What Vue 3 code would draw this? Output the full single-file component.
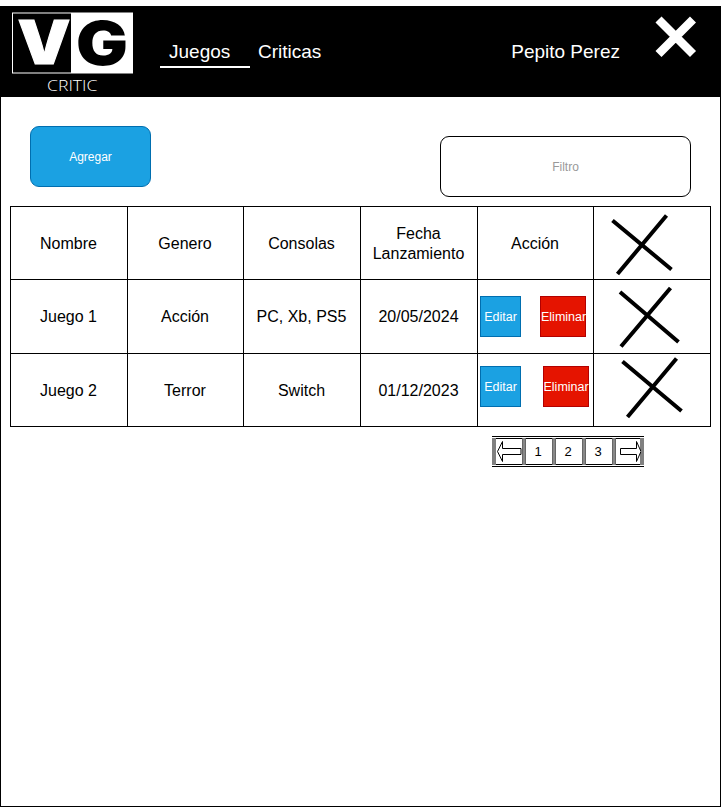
<script setup>
const headers = ['Nombre', 'Genero', 'Consolas', 'Fecha Lanzamiento', 'Acción']
const games = [
  { cells: ['Juego 1', 'Acción', 'PC, Xb, PS5', '20/05/2024'], cross: 'M620 291L678.5 341M670.5 287L621 345.5' },
  { cells: ['Juego 2', 'Terror', 'Switch', '01/12/2023'], cross: 'M622.5 361.5L681.5 411M676.5 358.5L627.5 417' },
]
const pages = [1, 2, 3]
</script>

<template>
  <div class="window">
    <header class="bar">
      <svg class="logo" width="124" height="90" viewBox="10 7 124 90">
        <rect x="12" y="12.5" width="121" height="61" fill="#fff" />
        <rect x="13" y="13.5" width="58" height="59" fill="#000" />
        <text class="mark v" x="17.5" y="64" font-size="60" textLength="53" lengthAdjust="spacingAndGlyphs">V</text>
        <text class="mark" x="76" y="64.5" font-size="61" textLength="52" lengthAdjust="spacingAndGlyphs" fill="#000">G</text>
        <text class="sub" x="47" y="91" font-size="15" textLength="50.5" lengthAdjust="spacingAndGlyphs" fill="#fff">CRITIC</text>
      </svg>
      <nav class="nav">
        <a class="link active">Juegos</a>
        <a class="link">Criticas</a>
      </nav>
      <span class="user">Pepito Perez</span>
      <svg class="close" width="42" height="42" viewBox="0 0 42 42">
        <path d="M3.5 3.5L38 38M38 3.5L3.5 38" stroke="#fff" stroke-width="8.5" />
      </svg>
    </header>

    <div class="tools">
      <button class="add">Agregar</button>
      <input class="filter" placeholder="Filtro" />
    </div>

    <div class="table">
      <div v-for="h in headers" :key="h" class="cell text low">{{ h }}</div>
      <div class="cell">
        <svg class="cross" width="116" height="72" viewBox="594 207 116 72">
          <path d="M612.5 220.5L671.5 269.5M666.5 215.5L617.5 274" />
        </svg>
      </div>
      <template v-for="(g, i) in games" :key="i">
        <div v-for="c in g.cells" :key="c" class="cell text" :class="{ low: i === 1 }">{{ c }}</div>
        <div class="cell actions" :class="{ last: i === 1 }">
          <button class="edit">Editar</button>
          <button class="remove">Eliminar</button>
        </div>
        <div class="cell">
          <svg class="cross" width="116" height="72" :viewBox="`594 ${i ? 354 : 280} 116 72`">
            <path :d="g.cross" />
          </svg>
        </div>
      </template>
    </div>

    <div class="pager">
      <div class="page">
        <svg width="26" height="23" viewBox="496 440 26 23"><path d="M521 448.5H502.5V441.5L497.5 451.5L502.5 461.5V454.5H521Z" /></svg>
      </div>
      <div v-for="p in pages" :key="p" class="page">{{ p }}</div>
      <div class="page">
        <svg width="26" height="23" viewBox="615 440 26 23"><path d="M620.5 448.5H636.5V441.5L641 451.5L636.5 461.5V454.5H620.5Z" /></svg>
      </div>
    </div>
  </div>
</template>

<style>
body {
  background: #fff;
}
</style>

<style scoped>
.window {
  box-sizing: border-box;
  width: 721px;
  height: 801px;
  margin-top: 6px;
  border: 1px solid #000;
  font-family: "Liberation Sans", Arial, sans-serif;
  color: #000;
}
.bar {
  display: flex;
  height: 90px;
  padding-left: 9px;
  background: #000;
  color: #fff;
  font-size: 19px;
  line-height: 22px;
}
.logo,
.close,
.cross,
.page svg {
  display: block;
  flex: none;
}
.mark {
  font-family: Inter, sans-serif;
  font-weight: 900;
}
.v {
  fill: #fff;
  stroke: #fff;
  stroke-width: 1;
}
.sub {
  font-family: "Open Sans", sans-serif;
  font-weight: 300;
}
.nav {
  display: flex;
  margin-left: 26px;
  padding-top: 34px;
}
.link {
  box-sizing: border-box;
  height: 27px;
  padding-left: 8px;
}
.active {
  width: 90px;
  padding-left: 9px;
  border-bottom: 2px solid #fff;
}
.user {
  margin-left: auto;
  padding-top: 34px;
}
.close {
  margin: 9px 23px 0 35px;
}
.tools {
  display: flex;
  justify-content: space-between;
  padding: 29px 29px 0;
}
.add,
.filter {
  box-sizing: border-box;
  height: 61px;
  padding: 0;
  border: 1px solid #006eaf;
  border-radius: 9px;
  font: 12px "Liberation Sans", Arial, sans-serif;
  text-align: center;
}
.add {
  width: 121px;
  background: #1ba1e2;
  color: #fff;
}
.filter {
  width: 251px;
  margin-top: 10px;
  border-color: #000;
  background: #fff;
}
.filter::placeholder {
  color: #999;
  opacity: 1;
}
.table {
  display: grid;
  grid-template-columns: 116px 115px 116px 116px 115px 116px;
  grid-template-rows: 72px 73px 72px;
  gap: 1px;
  width: 699px;
  margin: 9px 0 0 9px;
  border: 1px solid #000;
  background: #000;
}
.cell {
  display: flex;
  box-sizing: border-box;
  align-items: center;
  justify-content: center;
  min-width: 0;
  background: #fff;
  font-size: 16px;
  line-height: 20px;
  text-align: center;
}
.text {
  padding-right: 1px;
}
.low {
  padding-top: 2px;
}
.cross {
  fill: none;
  stroke: #000;
  stroke-width: 4;
}
.actions {
  align-items: flex-start;
  justify-content: flex-start;
  gap: 19px;
  padding: 16px 0 0 2px;
}
.last {
  gap: 21.5px;
  padding-top: 12px;
}
.edit,
.remove {
  box-sizing: border-box;
  width: 41px;
  height: 41px;
  padding: 0;
  border: 1px solid #006eaf;
  background: #1ba1e2;
  color: #fff;
  font: 12.5px "Liberation Sans", Arial, sans-serif;
}
.remove {
  width: 46px;
  border-color: #b20000;
  background: #e51400;
}
.pager {
  display: flex;
  width: 152px;
  margin: 9px 0 0 491px;
  border: 1px solid #000;
  border-width: 1px 0;
}
.page {
  display: flex;
  box-sizing: border-box;
  align-items: center;
  justify-content: center;
  width: 30px;
  height: 27px;
  margin: 1px 0;
  border: 0 solid #808080;
  border-left-width: 4px;
  box-shadow: inset 0 1px #000, inset 0 -1px #000;
  font-size: 13px;
}
.page + .page {
  border-left: 4px double #666;
  background: #777 padding-box;
  background: linear-gradient(#fff, #fff) padding-box, linear-gradient(#888, #888) border-box;
  padding-right: 2px;
}
.page:last-child {
  width: 32px;
  padding-right: 0;
  border-right: 4px solid #808080;
}
.page path {
  fill: #fff;
  stroke: #000;
}
</style>
